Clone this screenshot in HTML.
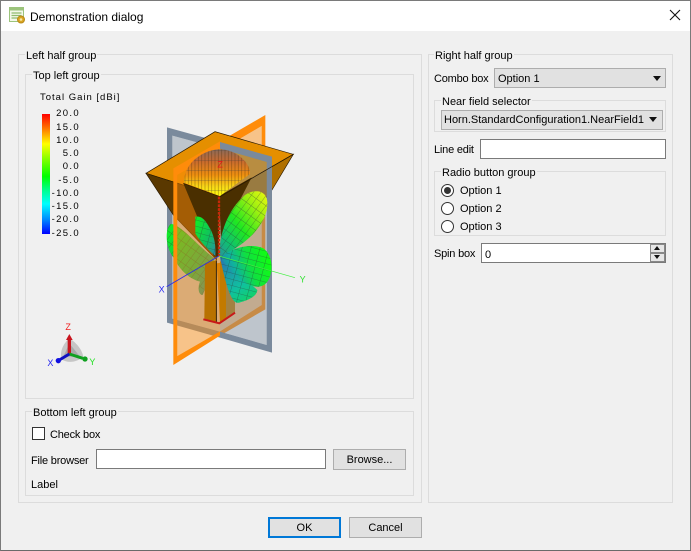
<!DOCTYPE html>
<html><head><meta charset="utf-8"><style>
html,body{margin:0;padding:0;background:#f0f0f0}
#w{position:relative;width:691px;height:551px;overflow:hidden;background:#f0f0f0;font:11px "Liberation Sans",sans-serif;color:#000}
#w div,#w span.t{position:absolute;box-sizing:border-box;white-space:nowrap}
.t{line-height:14px;height:14px}
.s{letter-spacing:-.2px}
.g{border:1px solid #dcdcdc}
.lg{background:#f0f0f0;padding:0 1px}
.e{background:#fff;border:1px solid #7a7a7a}
.b{background:#e1e1e1;border:1px solid #adadad;text-align:center}
.r{width:13px;height:13px;border-radius:50%;border:1px solid #333;background:#fff}
.n{font-size:9.5px;letter-spacing:1.35px;text-align:right;width:50px;left:30px;line-height:10px;height:10px}
.ar{width:0;height:0;border-left:4px solid transparent;border-right:4px solid transparent;border-top:5px solid #111}
</style></head><body><div id="w">
<div style="left:0;top:0;width:691px;height:31px;background:#fff"></div>
<div style="left:0;top:0;width:691px;height:551px;border:1px solid #7a7a7a;border-bottom:1px solid #6a6a6a;z-index:5"></div>
<svg style="position:absolute;left:8px;top:5px" width="20" height="20" viewBox="0 0 20 20"><rect x="1.5" y="2.5" width="14" height="14" fill="#f4f8ea" stroke="#9cc47c"/><rect x="2" y="3" width="13" height="2.5" fill="#9cc47c"/><path d="M3.5 8h10M3.5 10.500h10M3.500 13h7" stroke="#8fbb6e" stroke-width="1.300"/><circle cx="13" cy="14.500" r="3.500" fill="#d9a520" stroke="#b98a18"/><circle cx="13" cy="14.500" r="1.300" fill="#f6e7a8"/></svg>
<span class="t" style="left:30px;top:10px;font-size:12px">Demonstration dialog</span>
<svg style="position:absolute;left:669px;top:9px" width="12" height="12"><path d="M1 1L11 11M11 1L1 11" stroke="#111" stroke-width="1.100"/></svg>

<div class="g" style="left:18px;top:54px;width:404px;height:449px"></div>
<span class="t lg" style="left:25px;top:49px">Left half group</span>
<div class="g" style="left:25px;top:74px;width:389px;height:325px"></div>
<span class="t lg" style="left:32px;top:69px">Top left group</span>

<span class="t" style="left:40px;top:91px;font-size:9.5px;letter-spacing:1px">Total Gain [dBi]</span>
<div style="left:42px;top:114px;width:8px;height:120px;background:linear-gradient(#f00 0%,#ff8000 13%,#ff0 25%,#80ff00 38%,#0f0 52%,#0f8 63%,#0ff 75%,#08f 88%,#00f 100%)"></div>
<span class="t n" style="top:109px">20.0</span>
<span class="t n" style="top:123px">15.0</span>
<span class="t n" style="top:136px">10.0</span>
<span class="t n" style="top:149px">5.0</span>
<span class="t n" style="top:162px">0.0</span>
<span class="t n" style="top:176px">-5.0</span>
<span class="t n" style="top:189px">-10.0</span>
<span class="t n" style="top:202px">-15.0</span>
<span class="t n" style="top:215px">-20.0</span>
<span class="t n" style="top:229px">-25.0</span>

<svg style="position:absolute;left:30px;top:310px" width="80" height="70" viewBox="0 0 240 210">
<path d="M118 85C100 100 88 125 95 148C115 162 145 155 160 140C155 115 135 95 118 85Z" fill="#c6c6c6"/>
<path d="M118 100L100 140L150 140Z" fill="#a8a8a8"/>
<path d="M118 132V85" stroke="#c8141e" stroke-width="10"/><path d="M118 72L108 90H128Z" fill="#c8141e"/>
<path d="M118 132L158 145" stroke="#10a020" stroke-width="9"/><circle cx="165" cy="147" r="8" fill="#10a020"/>
<path d="M118 132L88 150" stroke="#1010c0" stroke-width="9"/><circle cx="85" cy="152" r="8" fill="#1010e0"/>
<text x="106" y="60" font-size="27" fill="#f02020" font-family="Liberation Sans">Z</text>
<text x="178" y="165" font-size="27" fill="#20e020" font-family="Liberation Sans">Y</text>
<text x="52" y="168" font-size="27" fill="#2020f0" font-family="Liberation Sans">X</text>
</svg>

<svg style="position:absolute;left:120px;top:100px" width="200" height="280" viewBox="0 0 600 840" font-family="Liberation Sans">
<defs>
<pattern id="m" width="26" height="18" patternUnits="userSpaceOnUse" patternTransform="rotate(-54)"><path d="M0 0H26M0 0V18" stroke="#2c3c34" stroke-opacity=".6" stroke-width="2.500" fill="none"/></pattern>
<pattern id="m2" width="26" height="18" patternUnits="userSpaceOnUse" patternTransform="rotate(15)"><path d="M0 0H26M0 0V18" stroke="#2c3c34" stroke-opacity=".6" stroke-width="2.500" fill="none"/></pattern>
<pattern id="d" width="10" height="30" patternUnits="userSpaceOnUse"><path d="M5 0V30" stroke="#402800" stroke-opacity=".45" stroke-width="2"/><path d="M0 0H10" stroke="#444" stroke-opacity=".6" stroke-width="2.500"/></pattern>
<linearGradient id="l1" x1="0" y1="1" x2="1" y2="0"><stop offset="0" stop-color="#2a90a0"/><stop offset=".2" stop-color="#10c070"/><stop offset=".45" stop-color="#20e820"/><stop offset=".75" stop-color="#a0f010"/><stop offset="1" stop-color="#f0f810"/></linearGradient>
<linearGradient id="l2" x1="0" y1=".7" x2="1" y2=".4"><stop offset="0" stop-color="#2a70b0"/><stop offset=".3" stop-color="#10b0a0"/><stop offset=".6" stop-color="#10e040"/><stop offset="1" stop-color="#10ff10"/></linearGradient>
<linearGradient id="l3" x1="0" y1="0" x2=".6" y2="1"><stop offset="0" stop-color="#2a70b0"/><stop offset=".7" stop-color="#10c0a0"/><stop offset="1" stop-color="#10d070"/></linearGradient>
<linearGradient id="l4" x1="1" y1="1" x2="0" y2="0"><stop offset="0" stop-color="#2a8aa8"/><stop offset=".4" stop-color="#10c060"/><stop offset="1" stop-color="#10f020"/></linearGradient>
<linearGradient id="dg" x1="0" y1="0" x2="0" y2="1"><stop offset="0" stop-color="#8a6a5a"/><stop offset=".25" stop-color="#c86a30"/><stop offset=".55" stop-color="#f09010"/><stop offset=".8" stop-color="#f8d818"/><stop offset="1" stop-color="#ffff10"/></linearGradient>
</defs>
<path d="M141 82L300 126V713L141 668ZM157 107V656L300 695V146Z" fill="#7a8a9c" fill-rule="evenodd"/>
<path d="M157 107L300 146V695L157 656Z" fill="#7a8a9c" fill-opacity=".42"/>
<path d="M300 124L436 45V628L300 707ZM425 78L300 151V694L425 615Z" fill="#ff8c0a" fill-rule="evenodd"/>
<path d="M300 151L425 78V615L300 694Z" fill="#ff8c0a" fill-opacity=".45"/>

<path d="M78 220L285 95L520 163L300 290Z" fill="#e58f00" stroke="#2a1a00" stroke-width="2"/>
<path d="M78 220L300 290L290 480L160 345Z" fill="#5a3800" stroke="#2a1a00" stroke-width="2"/>
<path d="M300 290L520 163L456 270L305 470Z" fill="#b07000" stroke="#2a1a00" stroke-width="2"/>

<path d="M290 490L345 480V638L300 668Z" fill="#c27a00"/>
<path d="M300 126L456 170V758L300 713ZM300 146V695L440 735V186Z" fill="#7a8a9c" fill-rule="evenodd"/>
<path d="M300 146L440 186V735L300 695Z" fill="#7a8a9c" fill-opacity=".42"/>
<path d="M297 288L395 232L303 410Z" fill="#4a2f00"/>
<path d="M300 290L520 163" fill="none" stroke="#2a1a00" stroke-width="2"/>
<path d="M300 484H318V660L300 668Z" fill="#c27a00"/>

<path d="M285 476C240 445 180 370 152 372C135 385 135 440 160 472C180 510 205 535 240 545C232 565 236 585 248 585C258 570 262 510 285 476Z" fill="url(#l4)"/><path d="M285 476C240 445 180 370 152 372C135 385 135 440 160 472C180 510 205 535 240 545C232 565 236 585 248 585C258 570 262 510 285 476Z" fill="url(#m)"/>

<path d="M160 205L300 124V707L160 795ZM172 225V768L300 694V151Z" fill="#ff8c0a" fill-rule="evenodd"/>
<path d="M172 225L300 151V694L172 768Z" fill="#ff8c0a" fill-opacity=".45"/>

<path d="M192 248C190 190 250 148 300 148C350 148 392 190 390 222L300 288Z" fill="url(#dg)"/><path d="M192 248C190 190 250 148 300 148C350 148 392 190 390 222L300 288Z" fill="url(#d)"/>

<path d="M190 250L300 290L296 470L282 470Z" fill="#4a2f00"/>
<path d="M190 250L300 290L390 238" fill="none" stroke="#2a1a00" stroke-width="2"/>
<path d="M226 350C250 345 262 372 270 385C284 410 288 440 286 468C265 450 240 425 226 400Z" fill="url(#l4)"/><path d="M226 350C250 345 262 372 270 385C284 410 288 440 286 468C265 450 240 425 226 400Z" fill="url(#m2)"/>

<path d="M297 465C298 405 322 330 375 285C405 265 442 270 442 310C442 365 395 425 300 470Z" fill="url(#l1)"/><path d="M297 465C298 405 322 330 375 285C405 265 442 270 442 310C442 365 395 425 300 470Z" fill="url(#m)"/>
<path d="M300 472C325 590 340 612 358 608C385 600 410 590 412 570C380 540 340 510 300 472Z" fill="url(#l3)"/><path d="M300 472C325 590 340 612 358 608C385 600 410 590 412 570C380 540 340 510 300 472Z" fill="url(#m2)"/>
<path d="M300 472C340 440 395 430 430 445C460 465 462 525 438 550C405 580 350 540 300 472Z" fill="url(#l2)"/><path d="M300 472C340 440 395 430 430 445C460 465 462 525 438 550C405 580 350 540 300 472Z" fill="url(#m2)"/>

<path d="M255 490L290 480V668L253 656Z" fill="#b87200"/>
<path d="M289 482V668" stroke="#1a1000" stroke-width="2.500"/>
<path d="M250 658L298 670L345 638" fill="none" stroke="#c81818" stroke-width="6"/>
<path d="M297 290V468" stroke="#c82808" stroke-width="7" stroke-dasharray="8 3.500"/>
<path d="M297 468L140 560" stroke="#2a2af0" stroke-width="2.500"/>
<path d="M297 468L525 533" stroke="#40f040" stroke-width="2"/>
<text x="292" y="203" font-size="27" fill="#e01818">Z</text>
<text x="116" y="578" font-size="27" fill="#2a2af0">X</text>
<text x="539" y="548" font-size="27" fill="#30e030">Y</text>
</svg>

<div class="g" style="left:25px;top:411px;width:389px;height:85px"></div>
<span class="t lg" style="left:32px;top:406px">Bottom left group</span>
<div style="left:32px;top:427px;width:13px;height:13px;background:#fff;border:1px solid #333"></div>
<span class="t s" style="left:50px;top:428px">Check box</span>
<span class="t s" style="left:31px;top:454px">File browser</span>
<div class="e" style="left:96px;top:449px;width:230px;height:20px"></div>
<div class="b" style="left:333px;top:449px;width:73px;height:21px;line-height:21px">Browse...</div>
<span class="t" style="left:31px;top:478px">Label</span>

<div class="g" style="left:428px;top:54px;width:245px;height:449px"></div>
<span class="t lg" style="left:434px;top:49px">Right half group</span>
<span class="t s" style="left:434px;top:72px">Combo box</span>
<div class="b" style="left:494px;top:68px;width:172px;height:20px;text-align:left;padding-left:3px;line-height:20px">Option 1</div>
<div class="ar" style="left:653px;top:76px"></div>
<div class="g" style="left:434px;top:100px;width:232px;height:32px"></div>
<span class="t lg" style="left:441px;top:95px">Near field selector</span>
<div class="b" style="left:441px;top:110px;width:222px;height:20px;text-align:left;padding-left:2px;line-height:19px">Horn.StandardConfiguration1.NearField1</div>
<div class="ar" style="left:649px;top:117px"></div>
<span class="t s" style="left:434px;top:143px">Line edit</span>
<div class="e" style="left:480px;top:139px;width:186px;height:20px"></div>
<div class="g" style="left:434px;top:171px;width:232px;height:65px"></div>
<span class="t lg" style="left:441px;top:166px">Radio button group</span>
<div class="r" style="left:441px;top:184px"></div>
<div style="left:444px;top:187px;width:7px;height:7px;border-radius:50%;background:#333"></div>
<span class="t" style="left:460px;top:184px">Option 1</span>
<div class="r" style="left:441px;top:202px"></div>
<span class="t" style="left:460px;top:202px">Option 2</span>
<div class="r" style="left:441px;top:220px"></div>
<span class="t" style="left:460px;top:220px">Option 3</span>
<span class="t s" style="left:434px;top:247px">Spin box</span>
<div class="e" style="left:481px;top:243px;width:185px;height:20px"></div>
<span class="t" style="left:485px;top:248px">0</span>
<div style="left:650px;top:244px;width:15px;height:9px;background:#e6e6e6;border:1px solid #888"></div>
<div style="left:650px;top:253px;width:15px;height:9px;background:#e6e6e6;border:1px solid #888"></div>
<div style="left:654px;top:246px;width:0;height:0;border-left:3px solid transparent;border-right:3px solid transparent;border-bottom:4px solid #111"></div>
<div style="left:654px;top:255px;width:0;height:0;border-left:3px solid transparent;border-right:3px solid transparent;border-top:4px solid #111"></div>

<div class="b" style="left:268px;top:517px;width:73px;height:21px;border:2px solid #0078d7;line-height:19px">OK</div>
<div class="b" style="left:349px;top:517px;width:73px;height:21px;line-height:21px">Cancel</div>
</div></body></html>
